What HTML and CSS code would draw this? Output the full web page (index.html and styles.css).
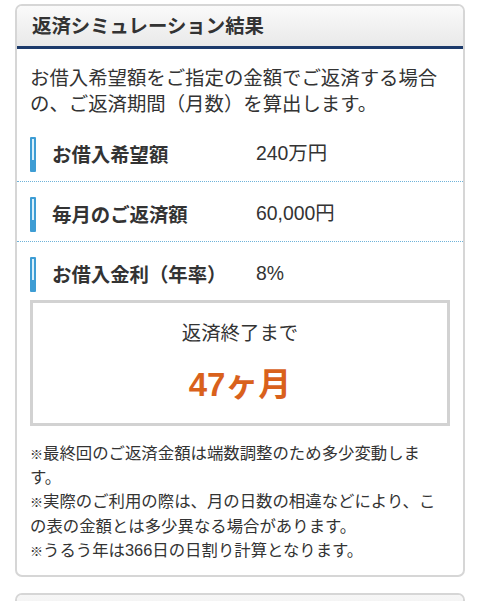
FILE: index.html
```html
<!DOCTYPE html>
<html lang="ja">
<head>
<meta charset="utf-8">
<link rel="stylesheet" href="styles.css">
</head>
<body>
<section class="card">
  <h2 class="card-head">返済シミュレーション結果</h2>
  <div class="card-body">
    <p class="intro">お借入希望額をご指定の金額でご返済する場合の、ご返済期間（月数）を算出します。</p>
    <div class="row">
      <span class="bar"></span>
      <span class="label">お借入希望額</span>
      <span class="value">240万円</span>
    </div>
    <div class="row">
      <span class="bar"></span>
      <span class="label">毎月のご返済額</span>
      <span class="value">60,000円</span>
    </div>
    <div class="row last">
      <span class="bar"></span>
      <span class="label">お借入金利（年率）</span>
      <span class="value">8%</span>
    </div>
    <div class="result">
      <div class="result-cap">返済終了まで</div>
      <div class="result-num">47ヶ月</div>
    </div>
    <div class="notes">
      <p><span class="kome">※</span>最終回のご返済金額は端数調整のため多少変動します。</p>
      <p><span class="kome">※</span>実際のご利用の際は、月の日数の相違などにより、この表の金額とは多少異なる場合があります。</p>
      <p><span class="kome">※</span>うるう年は366日の日割り計算となります。</p>
    </div>
  </div>
</section>
<section class="card next">
  <div class="card-head blank"></div>
</section>
</body>
</html>
```

FILE: styles.css
```css
html, body {
  margin: 0;
  padding: 0;
  background: #ffffff;
}
body {
  font-family: "Liberation Sans", "Noto Sans CJK JP", sans-serif;
  color: #333333;
}
.card {
  margin: 4px 15px 0 15px;
  width: 450px;
  box-sizing: border-box;
  border: 2px solid #d6d6d6;
  border-radius: 7px;
  overflow: hidden;
  background: #ffffff;
}
.card.next {
  margin-top: 16px;
  height: 40px;
}
.card-head {
  margin: 0;
  height: 40px;
  line-height: 40px;
  padding: 0 15px;
  font-size: 19.4px;
  font-weight: bold;
  color: #333333;
  background: linear-gradient(#fafafa, #e9e9e9);
  border-bottom: 3px solid #1c3a6b;
}
.card-head.blank {
  border-bottom: none;
  background: linear-gradient(#f6f6f6, #eeeeee);
}
.card-body {
  padding: 16px 0 13px 0;
}
.intro {
  margin: 0 13px 5px 13px;
  font-size: 19.4px;
  line-height: 26px;
}
.row {
  display: flex;
  align-items: center;
  padding: 15px 13px 9px 13px;
  border-bottom: 1px dotted #6fb3d9;
}
.row.last {
  border-bottom: none;
  padding-bottom: 8px;
}
.bar {
  position: relative;
  flex: none;
  width: 6px;
  height: 35px;
  background: #3e9dd4;
  border-radius: 1px;
}
.bar::after {
  content: "";
  position: absolute;
  left: 2px;
  top: 2px;
  width: 2px;
  height: 21px;
  background: #d9f0fb;
}
.label {
  flex: none;
  width: 204px;
  margin-left: 16px;
  font-size: 19.4px;
  font-weight: bold;
  line-height: 26px;
  color: #333333;
}
.value {
  font-size: 19.4px;
  line-height: 26px;
  margin-bottom: 3px;
}
.result {
  margin: 0 13px;
  border: 3px solid #d2d2d2;
  padding: 17px 0 18px 0;
  text-align: center;
}
.result-cap {
  font-size: 19.4px;
  line-height: 26px;
}
.result-num {
  margin-top: 19px;
  font-size: 33px;
  line-height: 40px;
  font-weight: bold;
  color: #d9611c;
}
.notes {
  margin: 15px 13px 0 13px;
  font-size: 16.4px;
  line-height: 24.2px;
}
.notes p {
  margin: 0;
}
.kome {
  font-size: 13px;
  line-height: 1;
}
```
